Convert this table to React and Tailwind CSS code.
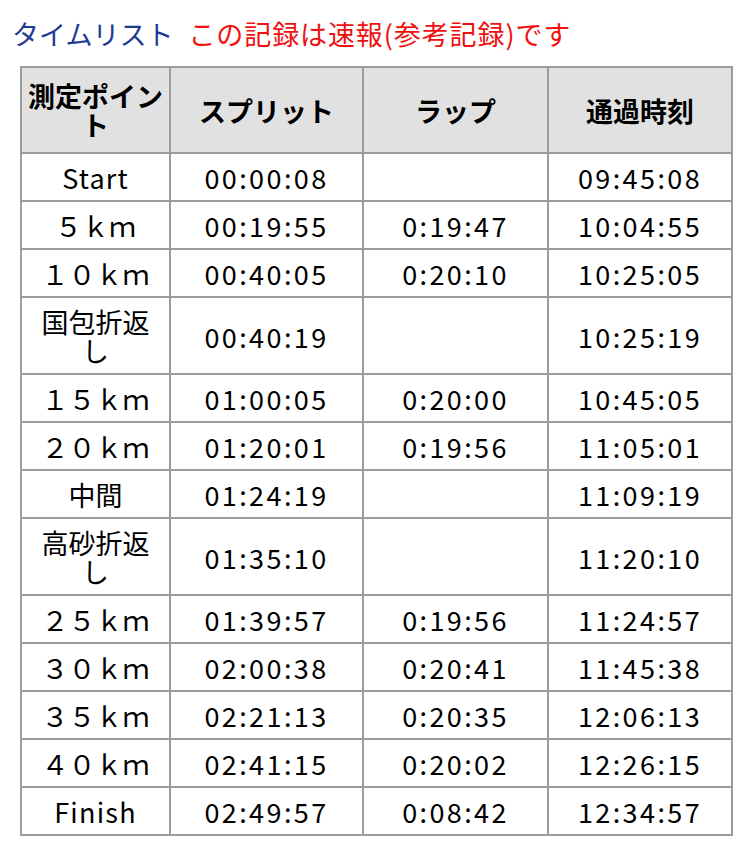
import React from "react";

const rows = [
  ["Start", "00:00:08", "", "09:45:08"],
  ["５ｋｍ", "00:19:55", "0:19:47", "10:04:55"],
  ["１０ｋｍ", "00:40:05", "0:20:10", "10:25:05"],
  [["国包折返", "し"], "00:40:19", "", "10:25:19"],
  ["１５ｋｍ", "01:00:05", "0:20:00", "10:45:05"],
  ["２０ｋｍ", "01:20:01", "0:19:56", "11:05:01"],
  ["中間", "01:24:19", "", "11:09:19"],
  [["高砂折返", "し"], "01:35:10", "", "11:20:10"],
  ["２５ｋｍ", "01:39:57", "0:19:56", "11:24:57"],
  ["３０ｋｍ", "02:00:38", "0:20:41", "11:45:38"],
  ["３５ｋｍ", "02:21:13", "0:20:35", "12:06:13"],
  ["４０ｋｍ", "02:41:15", "0:20:02", "12:26:15"],
  ["Finish", "02:49:57", "0:08:42", "12:34:57"],
];

const cell =
  "border-2 border-[#9c9c9c] text-center align-middle pt-[9px] pb-[8px] px-1";
const num = cell + " tracking-[2.4px]";
const head = "border-2 border-[#9c9c9c] text-center align-middle py-[13px]";

const App = () => {
  return (
    <div
      className="min-h-screen bg-white text-black"
      style={{ fontFamily: '"Noto Sans CJK JP", "Noto Sans", sans-serif' }}
    >
      {/* Title */}
      <div className="pl-[12px] pt-[15px] h-[66px] text-[27px] leading-[37px]">
        <span className="text-[#1f3a93]">タイムリスト</span>
        <span className="text-[#f01010] ml-[15px] tracking-[0.9px]">
          この記録は速報(参考記録)です
        </span>
      </div>

      {/* Time table */}
      <table className="ml-[20px] w-[711px] table-fixed border-collapse text-[27px] leading-[29px]">
        <colgroup>
          <col className="w-[149px]" />
          <col className="w-[193px]" />
          <col className="w-[185px]" />
          <col className="w-[184px]" />
        </colgroup>
        <thead>
          <tr className="bg-[#e1e1e1] font-bold">
            <th className={head + " px-0"}>
              <div>測定ポイン</div>
              <div>ト</div>
            </th>
            <th className={head}>スプリット</th>
            <th className={head}>ラップ</th>
            <th className={head}>通過時刻</th>
          </tr>
        </thead>
        <tbody>
          {rows.map((r, i) => (
            <tr key={i}>
              <td className={cell + (/^[A-Za-z]/.test(r[0]) ? " tracking-[1.2px]" : "")}>
                {Array.isArray(r[0]) ? (
                  <>
                    <div>{r[0][0]}</div>
                    <div>{r[0][1]}</div>
                  </>
                ) : (
                  r[0]
                )}
              </td>
              <td className={num}>{r[1]}</td>
              <td className={num}>{r[2]}</td>
              <td className={num}>{r[3]}</td>
            </tr>
          ))}
        </tbody>
      </table>
    </div>
  );
};

export default App;
